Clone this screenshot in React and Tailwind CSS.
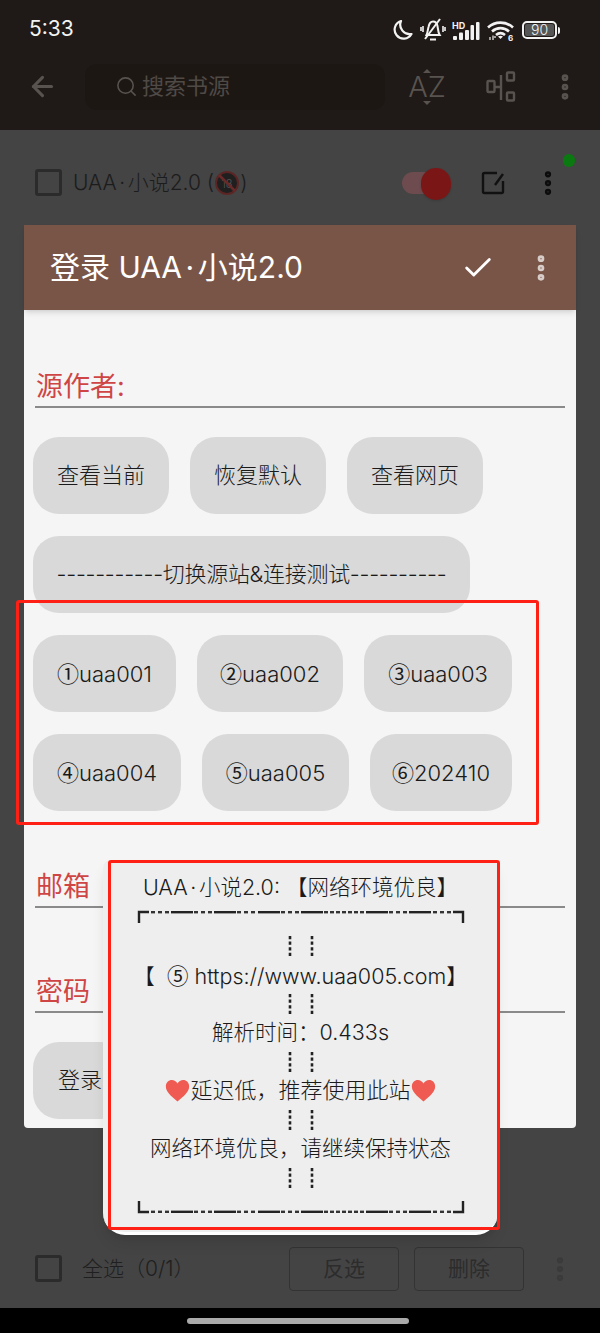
import { Check, EllipsisVertical, ArrowLeft, Search } from 'lucide-react';

const font = "font-['Inter','Noto_Sans_CJK_SC',sans-serif] font-light";

const buttonRows = [
  [
    { mark: '', label: '查看当前', width: 'w-[136px]' },
    { mark: '', label: '恢复默认', width: 'w-[136px]' },
    { mark: '', label: '查看网页', width: 'w-[136px]' },
  ],
  [{ mark: '', label: '-----------切换源站&连接测试----------', width: 'w-[437px] tracking-[-0.3px]' }],
  [
    { mark: '①', label: 'uaa001', width: 'w-[143px]' },
    { mark: '②', label: 'uaa002', width: 'w-[146px]' },
    { mark: '③', label: 'uaa003', width: 'w-[148px]' },
  ],
  [
    { mark: '④', label: 'uaa004', width: 'w-[148px]' },
    { mark: '⑤', label: 'uaa005', width: 'w-[147px]' },
    { mark: '⑥', label: '202410', width: 'w-[142px]' },
  ],
];

// long dashes start every 43px, the gap between 4th and 5th is all short ones
const longDashes = [34, 77, 121, 164, 229, 272];
const shortDashes = [
  14, 21, 28, 57, 64, 71, 100, 107, 114, 144, 151, 158,
  187, 193, 199, 205, 211, 217, 223, 252, 259, 266, 296, 303, 310,
];

// Inter's circled digits are too large, the CJK font has the right ones
function Mark({ children }) {
  return <span className="font-['Noto_Sans_CJK_SC'] font-normal">{children}</span>;
}

function Dot() {
  return <span className="px-[0.12em]">·</span>;
}

function DashedFrame({ flip }) {
  return (
    <div className="h-[29px] flex items-center justify-center">
      <svg width="328" height="14" viewBox="0 0 328 14" className={flip ? '-scale-y-100' : ''}>
        <path d="M2 13V2H12M326 13V2H316" fill="none" stroke="#222" strokeWidth="2.4" />
        {longDashes.map(x => (
          <rect key={x} x={x} y="1" width="22" height="2.4" fill="#222" />
        ))}
        {shortDashes.map(x => (
          <rect key={x} x={x} y="1" width="4" height="2.4" fill="#333" />
        ))}
      </svg>
    </div>
  );
}

function DottedPair() {
  return (
    <div className="h-[29px] flex items-center justify-center">
      <svg width="26" height="20" viewBox="0 0 26 20">
        <path d="M2 0V20M24 0V20" stroke="#222" strokeWidth="2.6" strokeDasharray="3.2 2.4" />
      </svg>
    </div>
  );
}

function Heart() {
  return (
    <svg width="25" height="23" viewBox="0 0 24 22" className="shrink-0">
      <path
        d="M12 21.5C5 16 .8 12 .8 7 .8 3.500 3.500 1 6.600 1 8.800 1 10.800 2.200 12 4.200 13.200 2.200 15.200 1 17.400 1 20.500 1 23.200 3.500 23.200 7 23.200 12 19 16 12 21.500Z"
        fill="#ef5b52"
      />
    </svg>
  );
}

function Checkbox() {
  return <span className="w-[27px] h-[27px] shrink-0 border-[3px] border-[#2b2b2b] rounded-[3px]" />;
}

function Field({ label, className }) {
  return (
    <div className={`mx-[11px] h-[40px] border-b-2 border-[#8a8a8a] flex items-center pl-[1px] text-[27px] font-normal text-[#cf4545] ${className}`}>
      {label}
    </div>
  );
}

function StatusIcons() {
  return (
    <div className="flex items-center text-[#f2f2f2]">
      {/* moon */}
      <svg width="20" height="22" viewBox="0 0 20 22" className="mr-[7px]">
        <path d="M8 2A9 9 0 1 0 18.500 15 9.500 9.500 0 0 1 8 2Z" fill="none" stroke="currentColor" strokeWidth="2.200" strokeLinejoin="round" />
      </svg>
      {/* muted bell */}
      <svg width="26" height="24" viewBox="0 0 26 24" className="mr-[6px]">
        <path d="M6.500 17c1.200-2.500 1.200-5 2-8C9.200 5.500 11 3.500 13 3.500c2.200 0 4 2 4.500 4.500.5 3.500.7 6.500 2.200 9Z M10 21.500h6" fill="none" stroke="currentColor" strokeWidth="2" />
        <path d="M5 21 20 1" stroke="currentColor" strokeWidth="2" />
        <path d="M3 8v6M1 9v4M23 8v6M25 9v4" stroke="currentColor" strokeWidth="1.600" />
      </svg>
      {/* HD signal */}
      <svg width="28" height="19" viewBox="0 0 28 19" className="mr-[7px]">
        <text x="0" y="8" fontSize="9" fontWeight="700" fontFamily="Inter" fill="currentColor">HD</text>
        <rect x="1" y="15" width="4" height="4" rx="1" fill="currentColor" />
        <rect x="7" y="11.500" width="4" height="7.500" rx="1" fill="currentColor" />
        <rect x="13" y="9" width="4" height="10" rx="1" fill="currentColor" />
        <rect x="18.500" y="4" width="3.500" height="15" rx="1" fill="currentColor" />
        <rect x="24" y="1" width="3.500" height="18" rx="1" fill="currentColor" />
      </svg>
      {/* wifi */}
      <svg width="27" height="21" viewBox="0 0 27 21" className="mr-[8px]">
        <path d="M1 7.500C8 1 19 1 26 7.500M5 11.500C10 7 17 7 22 11.500M9 15c3-2.500 6-2.500 9 0" fill="none" stroke="currentColor" strokeWidth="2.600" />
        <path d="M13.500 19 11 16.500c1.500-1 3.500-1 5 0Z" fill="currentColor" />
        <path d="M3 17v3M6 15.500V20M8 16v2" stroke="currentColor" strokeWidth="1.200" />
        <text x="21" y="20.500" fontSize="8" fontWeight="700" fontFamily="Inter" fill="currentColor">6</text>
      </svg>
      {/* battery */}
      <div className="w-[35px] h-[18px] border-2 border-[#f2f2f2] rounded-[5px] p-[1px] flex">
        <div className="w-full bg-[#555] rounded-[2px] flex items-center justify-center text-[14px] leading-none text-[#f2f2f2]">90</div>
      </div>
      <div className="w-[2px] h-[7px] ml-[1px] bg-[#f2f2f2] rounded-r-sm" />
    </div>
  );
}

function AdultBadge() {
  return (
    <svg width="24" height="24" viewBox="0 0 24 24" className="mx-[1px]">
      <circle cx="12" cy="12" r="11" fill="#1f1f1f" stroke="#5c2525" strokeWidth="2" />
      <text x="12" y="17" textAnchor="middle" fontSize="11" fontFamily="Inter" fill="#555">18</text>
      <path d="M4 4 20 20" stroke="#6b2a2a" strokeWidth="2.500" />
    </svg>
  );
}

function SortIcon() {
  return (
    <div className="ml-[26px] w-[32px] flex flex-col items-center gap-[2px]">
      <span className="w-0 h-0 border-x-[4px] border-x-transparent border-b-[4px] border-b-[#59534f]" />
      <span className="text-[29px] leading-[24px] font-light">AZ</span>
      <span className="w-0 h-0 border-x-[4px] border-x-transparent border-t-[4px] border-t-[#59534f]" />
    </div>
  );
}

export default function App() {
  return (
    <div className={`relative w-[600px] h-[1333px] overflow-hidden flex flex-col bg-[#444444] ${font}`}>
      {/* Top bar */}
      <header className="h-[130px] shrink-0 bg-[#1f1917] flex flex-col">
        <div className="h-[58px] pt-[18px] pl-[29px] pr-[40px] flex items-start justify-between">
          <span className="text-[21px] leading-[21px] font-normal text-[#f2f2f2]">5:33</span>
          <StatusIcons />
        </div>
        <div className="flex-1 flex items-center pl-[27px] pb-[15px] text-[#59534f]">
          <ArrowLeft size={31} strokeWidth={2.400} />
          <div className="ml-[27px] w-[300px] h-[46px] rounded-xl bg-[#1d1714] flex items-center pl-[30px] gap-[4px]">
            <Search size={23} strokeWidth={1.600} />
            <span className="text-[22px] font-normal text-[#4f4a46]">搜索书源</span>
          </div>
          <SortIcon />
          <svg width="30" height="32" viewBox="0 0 30 32" className="ml-[43px]" fill="none" stroke="currentColor" strokeWidth="2.400">
            <rect x="1.500" y="10" width="7" height="11" rx="1" />
            <rect x="21" y="1.500" width="7" height="8" rx="1" />
            <rect x="21" y="21.500" width="7" height="8" rx="1" />
            <path d="M9 16h6M15 4v25" />
          </svg>
          <EllipsisVertical size={32} strokeWidth={3} className="ml-[33px]" />
        </div>
      </header>

      {/* List */}
      <main className="flex-1 relative">
        <div className="mt-[39px] pl-[35px] pr-[38px] h-[27px] flex items-center text-[#1c1c1c]">
          <Checkbox />
          <span className="ml-[11px] text-[21px] flex items-center whitespace-pre">
            UAA<Dot />小说2.0 (<AdultBadge />)
          </span>
          <div className="ml-auto relative w-[49px] h-[22px] rounded-full bg-[#6d4b4e]">
            <div className="absolute right-0 -top-[4px] w-[30px] h-[32px] rounded-full bg-[#7b1616] shadow" />
          </div>
          <svg width="24" height="24" viewBox="0 0 24 24" className="ml-[30px]" fill="none" stroke="#111" strokeWidth="2.400">
            <path d="M16 2H3.500A1.500 1.500 0 0 0 2 3.500v17A1.500 1.500 0 0 0 3.500 22h17a1.500 1.500 0 0 0 1.500-1.500V10" />
            <path d="M14 14 22 3" />
          </svg>
          <EllipsisVertical size={30} strokeWidth={3} color="#0c0c0c" className="ml-[28px] mr-[-1px]" />
        </div>
        <span className="absolute left-[563px] top-[24px] w-[12px] h-[13px] rounded-full bg-[#0a7a10]" />
      </main>

      {/* Bottom action bar */}
      <footer className="h-[78px] shrink-0 flex items-start pt-[17px] pl-[35px] pr-[31px]">
        <div className="h-[43px] flex items-center">
          <Checkbox />
        </div>
        <span className="ml-[20px] h-[43px] flex items-center text-[21px] text-[#1f1f1f]">全选（0/1）</span>
        <button className="ml-auto w-[110px] h-[44px] rounded-[4px] border border-[#333] text-[21px] font-normal text-[#2c2c2c]">反选</button>
        <button className="ml-[15px] w-[110px] h-[44px] rounded-[4px] border border-[#333] text-[21px] font-normal text-[#2c2c2c]">删除</button>
        <EllipsisVertical size={30} strokeWidth={3} color="#3a3a3a" className="ml-[21px] mt-[7px] -mr-[6px]" />
      </footer>
      <nav className="h-[25px] shrink-0 bg-black flex justify-center pt-[10px] pr-[4px]">
        <div className="w-[222px] h-[6px] rounded-full bg-[#aaaaaa]" />
      </nav>

      {/* Login dialog */}
      <section className="absolute left-[24px] top-[225px] w-[552px] rounded-b-[4px] bg-[#f5f5f5] pb-[9px]">
        <div className="relative h-[85px] bg-[#795548] shadow-md flex items-center pl-[26px] pr-[19px] text-white">
          <h1 className="text-[30px] font-normal">登录 UAA<Dot />小说2.0</h1>
          <Check size={34} strokeWidth={2} className="ml-auto" />
          <EllipsisVertical size={32} strokeWidth={3} color="#d7ccc8" className="ml-[30px]" />
        </div>
        <Field label="源作者:" className="mt-[58px]" />
        <div className="mt-[29px] pl-[9px] flex flex-col gap-[22px]">
          {buttonRows.map((row, i) => (
            <div key={i} className="flex gap-[21px]">
              {row.map(btn => (
                <button key={btn.label} className={`${btn.width} h-[77px] rounded-[26px] bg-[#d9d9d9] text-[22px] text-[#1a1a1a]`}>
                  {btn.mark && <Mark>{btn.mark}</Mark>}
                  {btn.label}
                </button>
              ))}
            </div>
          ))}
        </div>
        <Field label="邮箱" className="mt-[57px]" />
        <Field label="密码" className="mt-[65px]" />
        <div className="mt-[29px] pl-[9px]">
          <button className="w-[94px] h-[77px] rounded-[26px] bg-[#d9d9d9] text-[22px] text-[#1a1a1a]">登录</button>
        </div>
      </section>

      {/* Test result popup */}
      <aside className="absolute left-[103px] top-[860px] w-[395px] h-[375px] rounded-b-[22px] rounded-t-[8px] bg-[#eeeeee] border-b-[3px] border-white shadow-lg pt-[13px] text-[21.500px] leading-[29px] text-[#1a1a1a] text-center">
        <p className="h-[29px]">UAA<Dot />小说2.0: 【网络环境优良】</p>
        <DashedFrame />
        <DottedPair />
        <p className="h-[29px]">【&nbsp;&nbsp;<Mark>⑤</Mark> https://www.uaa005.com】</p>
        <DottedPair />
        <p className="h-[29px]">解析时间：0.433s</p>
        <DottedPair />
        <p className="h-[29px] flex items-center justify-center text-[22px]">
          <Heart />
          延迟低，推荐使用此站
          <Heart />
        </p>
        <DottedPair />
        <p className="h-[29px]">网络环境优良，请继续保持状态</p>
        <DottedPair />
        <DashedFrame flip />
      </aside>

      {/* Red annotation boxes */}
      <div className="absolute left-[16px] top-[600px] w-[523px] h-[225px] border-[3px] border-[#ff2015] rounded-[3px]" />
      <div className="absolute left-[108px] top-[860px] w-[392px] h-[370px] border-[3px] border-[#ff2015] rounded-[3px]" />
    </div>
  );
}
